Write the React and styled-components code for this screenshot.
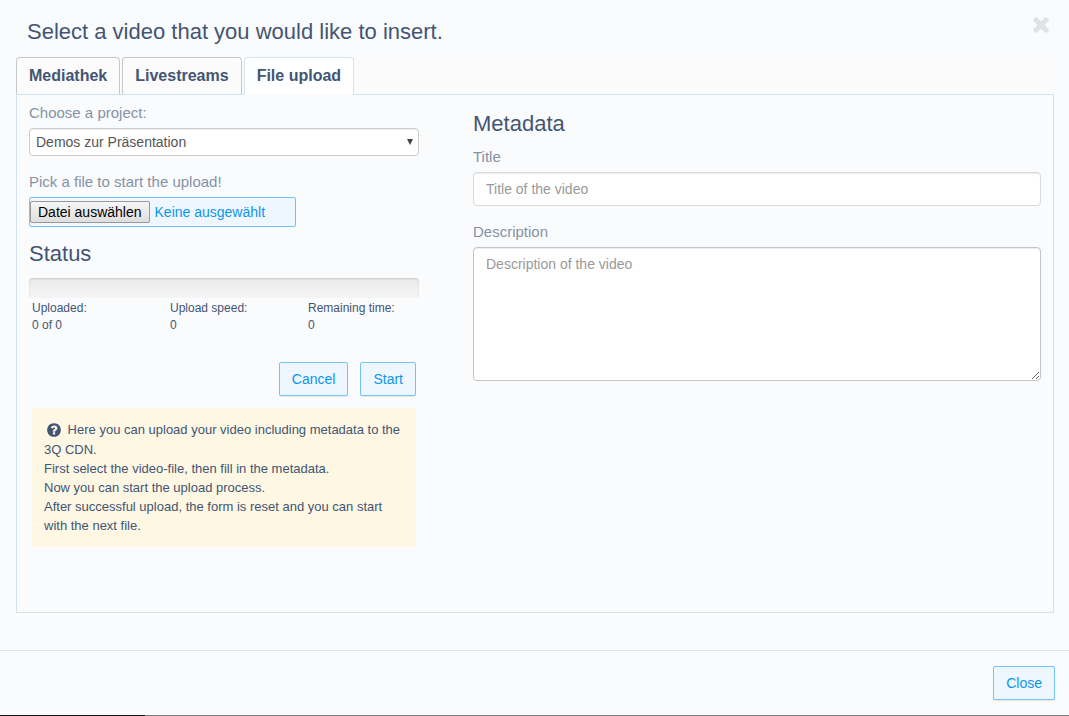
import React from "react";
import styled, { createGlobalStyle, css } from "styled-components";

const GlobalStyle = createGlobalStyle`
  *, *::before, *::after { box-sizing: border-box; }
  body {
    margin: 0;
    background: #fafbfd;
    color: #435573;
    font: 14px/20px "Liberation Sans", Arial, sans-serif;
  }
  button, input, select, textarea { font-family: inherit; }
`;

const Header = styled.header`
  display: flex;
  justify-content: space-between;
  align-items: flex-start;
  padding: 17px 20px 0 27px;
`;

const Heading = styled.h2`
  margin: 0;
  font-size: 22px;
  line-height: 30px;
  font-weight: 400;
`;

const DismissButton = styled.button`
  display: flex;
  padding: 0;
  border: 0;
  background: none;
  color: #dee3e7;
  cursor: pointer;
`;

const Main = styled.main`
  padding: 10px 15px 37px 16px;
`;

const TabList = styled.nav`
  display: flex;
  align-items: flex-start;
  gap: 2px;
  height: 37px;
  background: #fbfbfb;
`;

const Tab = styled.button`
  height: 37px;
  padding: 0 12px;
  border: 1px solid #c8c8c8;
  border-bottom: 0;
  border-radius: 4px 4px 0 0;
  background: #fbfbfb;
  color: #435573;
  font-size: 16px;
  line-height: 20px;
  font-weight: 700;
  cursor: pointer;
  ${({ $active }) =>
    $active &&
    css`
      position: relative;
      z-index: 1;
      height: 38px;
      padding-bottom: 1px;
      border-color: #d5e3ee;
      background: #fff;
    `}
`;

const Panel = styled.section`
  display: grid;
  grid-template-columns: minmax(0, 390fr) minmax(0, 568fr);
  gap: 54px;
  padding: 8px 12px 65px;
  border: 1px solid #d5e3ee;
`;

const Column = styled.div`
  display: flex;
  flex-direction: column;
  align-items: stretch;
  padding-top: ${({ $top }) => $top || 0}px;
`;

const Label = styled.label`
  margin-bottom: 5px;
  color: #8592a6;
  font-size: 15px;
  line-height: 20px;
`;

const SelectBox = styled.div`
  position: relative;
  margin-bottom: 16px;
`;

const Select = styled.select`
  display: block;
  width: 100%;
  height: 28px;
  padding: 0 24px 0 6px;
  appearance: none;
  border: 1px solid #ccc;
  border-radius: 4px;
  background: #fff;
  box-shadow: inset 0 1px 1px rgba(0, 0, 0, 0.075);
  color: #555;
  font-size: 14px;
`;

const Arrow = styled.svg`
  position: absolute;
  right: 6px;
  top: 11px;
  pointer-events: none;
`;

const FilePicker = styled.div`
  position: relative;
  display: flex;
  align-items: center;
  gap: 5px;
  width: 267px;
  max-width: 100%;
  height: 30px;
  margin-bottom: 12px;
  border: 1px solid #76c4f5;
  border-radius: 2px;
  background: #eef6ff;
  color: #0d95ec;
`;

const FileButton = styled.span`
  padding: 0 7px;
  border: 1px solid #999;
  border-radius: 2px;
  background: linear-gradient(#f6f6f6, #dedede);
  color: #000;
`;

const FileInput = styled.input`
  position: absolute;
  inset: 0;
  width: 100%;
  height: 100%;
  opacity: 0;
  cursor: pointer;
`;

const SubHeading = styled(Heading)`
  margin-bottom: ${({ $gap }) => $gap}px;
`;

const Progress = styled.div`
  height: 20px;
  border-radius: 4px;
  background: linear-gradient(#ebebeb, #f5f5f5);
  box-shadow: inset 0 1px 2px rgba(0, 0, 0, 0.15);
`;

const Stats = styled.dl`
  display: grid;
  grid-template-columns: repeat(3, minmax(0, 1fr));
  gap: 27px;
  margin: 2px 0 28px 3px;
  font-size: 12px;
  line-height: 17px;

  dt, dd { margin: 0; }
`;

const Actions = styled.div`
  display: flex;
  justify-content: flex-end;
  gap: 12px;
  margin: 0 3px 12px;
`;

const Button = styled.button`
  height: 34px;
  padding: 0 12px;
  border: 1px solid #76c4f5;
  border-radius: 2px;
  background: #eef6ff;
  box-shadow: 0 1px 1px rgba(0, 0, 0, 0.08);
  color: #0d95ec;
  font-size: 14px;
  line-height: 20px;
  cursor: pointer;
`;

const Hint = styled.div`
  margin: 0 3px;
  padding: 12px;
  background: #fdf7e3;
  font-size: 13px;
  line-height: 19px;

  p { margin: 0; }
  svg { margin: 0 2px 2px; vertical-align: -6px; }
`;

const fieldStyle = css`
  display: block;
  width: 100%;
  padding: 6px 12px;
  border-radius: 4px;
  background: #fff;
  box-shadow: inset 0 1px 1px rgba(0, 0, 0, 0.075);
  color: #555;
  font-size: 14px;
  line-height: 20px;

  &::placeholder { color: #999; opacity: 1; }
`;

const TextInput = styled.input`
  ${fieldStyle}
  height: 34px;
  margin-bottom: 16px;
  border: 1px solid #dadada;
`;

const TextArea = styled.textarea`
  ${fieldStyle}
  height: 134px;
  border: 1px solid #c4c4c4;
  resize: both;
`;

const Footer = styled.footer`
  display: flex;
  justify-content: flex-end;
  padding: 15px 14px 15px;
  border-top: 1px solid #e1e5e9;
`;

const PageEdge = styled.div`
  height: 1px;
  background: linear-gradient(90deg, #111 145px, #7d7d7d 145px);
`;

const TABS = ["Mediathek", "Livestreams", "File upload"];

const STATS = [
  ["Uploaded:", "0 of 0"],
  ["Upload speed:", "0"],
  ["Remaining time:", "0"],
];

const CrossIcon = () => (
  <svg width="16" height="16" viewBox="296 360 1200 1200" fill="currentColor" aria-hidden="true">
    <path d="M1490 1322q0 40-28 68l-136 136q-28 28-68 28t-68-28l-294-294-294 294q-28 28-68 28t-68-28l-136-136q-28-28-28-68t28-68l294-294-294-294q-28-28-28-68t28-68l136-136q28-28 68-28t68 28l294 294 294-294q28-28 68-28t68 28l136 136q28 28 28 68t-28 68l-294 294 294 294q28 28 28 68z" />
  </svg>
);

const QuestionIcon = () => (
  <svg width="16" height="16" viewBox="0 0 1792 1792" fill="currentColor" aria-hidden="true">
    <path d="M1024 1376v-192q0-14-9-23t-23-9h-192q-14 0-23 9t-9 23v192q0 14 9 23t23 9h192q14 0 23-9t9-23zM1280 704q0-88-55.5-163t-138.5-116-170-41q-243 0-371 213-15 24 8 42l132 100q7 6 19 6 16 0 25-12 53-68 86-92 34-24 86-24 48 0 85.5 26t37.5 59q0 38-20 61t-68 45q-63 28-115.5 86.5t-52.5 125.5v36q0 14 9 23t23 9h192q14 0 23-9t9-23q0-19 21.5-49.5t54.5-49.5q32-18 49-28.5t46-35 44.5-48 28-60.5 12.5-81zM1664 896q0 209-103 385.5t-279.5 279.5-385.5 103-385.5-103-279.5-279.5-103-385.5 103-385.5 279.5-279.5 385.5-103 385.5 103 279.5 279.5 103 385.5z" />
  </svg>
);

export default function App() {
  return (
    <>
      <GlobalStyle />
      <Header>
        <Heading as="h1">Select a video that you would like to insert.</Heading>
        <DismissButton type="button" aria-label="Dismiss">
          <CrossIcon />
        </DismissButton>
      </Header>
      <Main>
        <TabList>
          {TABS.map((name) => (
            <Tab key={name} type="button" $active={name === "File upload"}>
              {name}
            </Tab>
          ))}
        </TabList>
        <Panel>
          <Column>
            <Label htmlFor="project">Choose a project:</Label>
            <SelectBox>
              <Select id="project">
                <option>Demos zur Präsentation</option>
              </Select>
              <Arrow width="6" height="6" viewBox="0 0 6 6" aria-hidden="true">
                <path d="M0 0H6L3 6Z" fill="#444" />
              </Arrow>
            </SelectBox>
            <Label htmlFor="file">Pick a file to start the upload!</Label>
            <FilePicker>
              <FileButton>Datei auswählen</FileButton>
              <span>Keine ausgewählt</span>
              <FileInput id="file" type="file" />
            </FilePicker>
            <SubHeading $gap={9}>Status</SubHeading>
            <Progress role="progressbar" aria-label="Upload" aria-valuenow={0} />
            <Stats>
              {STATS.map(([term, value]) => (
                <div key={term}>
                  <dt>{term}</dt>
                  <dd>{value}</dd>
                </div>
              ))}
            </Stats>
            <Actions>
              <Button type="button">Cancel</Button>
              <Button type="button">Start</Button>
            </Actions>
            <Hint>
              <p>
                <QuestionIcon /> Here you can upload your video including metadata to the 3Q CDN.
              </p>
              <p>First select the video-file, then fill in the metadata.</p>
              <p>Now you can start the upload process.</p>
              <p>After successful upload, the form is reset and you can start with the next file.</p>
            </Hint>
          </Column>
          <Column $top={6}>
            <SubHeading $gap={8}>Metadata</SubHeading>
            <Label htmlFor="title">Title</Label>
            <TextInput id="title" type="text" placeholder="Title of the video" />
            <Label htmlFor="description">Description</Label>
            <TextArea id="description" placeholder="Description of the video" />
          </Column>
        </Panel>
      </Main>
      <Footer>
        <Button type="button">Close</Button>
      </Footer>
      <PageEdge />
    </>
  );
}
